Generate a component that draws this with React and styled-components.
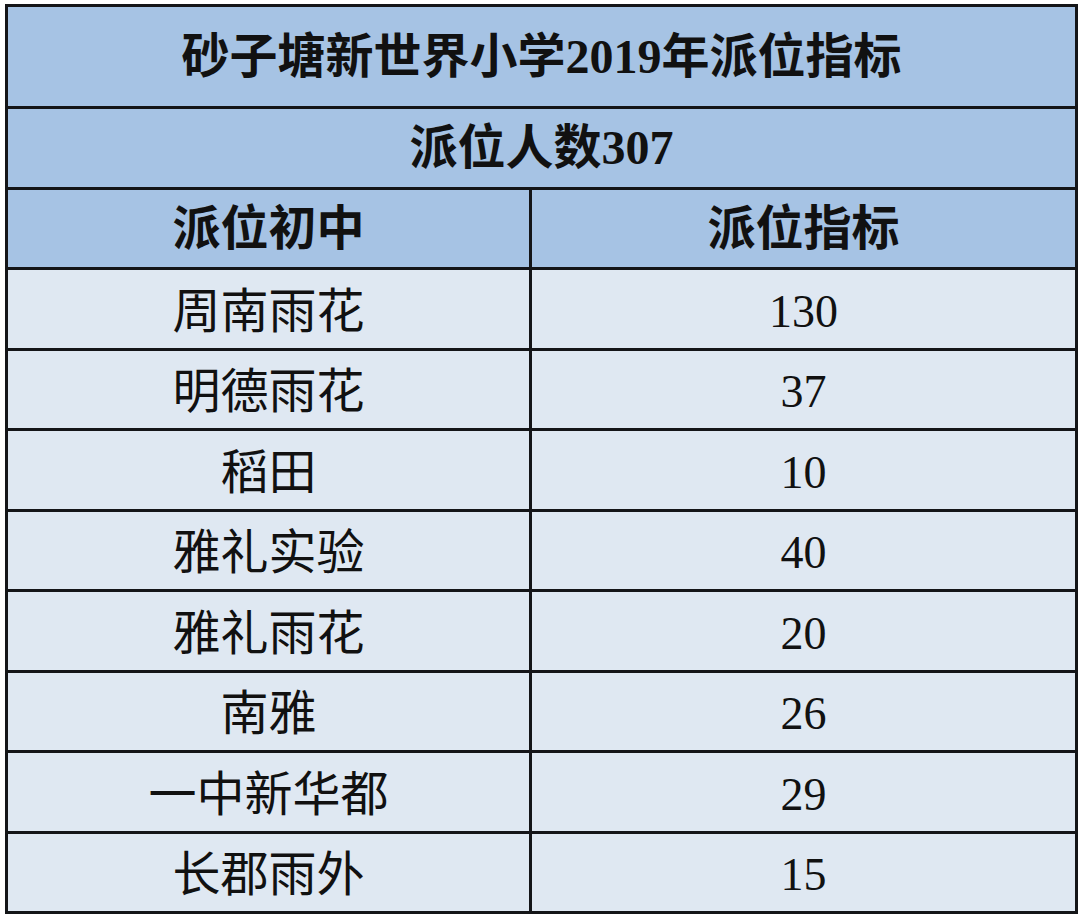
import React from 'react';
import styled, { createGlobalStyle } from 'styled-components';

const GlobalStyle = createGlobalStyle`
  html, body {
    margin: 0;
    padding: 0;
    background: #ffffff;
  }
`;

const Page = styled.div`
  padding: 4px 5px 0 5px;
  width: 1070px;
`;

const Table = styled.table`
  width: 1070px;
  border-collapse: collapse;
  table-layout: fixed;
  font-family: "Liberation Serif", "Noto Sans CJK SC", serif;
  color: #111;
`;

const Cell = styled.td`
  border: 3px solid #141518;
  background: ${p => (p.$head ? '#a6c3e4' : '#dfe8f2')};
  height: ${p => p.$h}px;
  padding: ${p => (p.$head ? '0' : '6px 0 0 0')};
  box-sizing: border-box;
  text-align: center;
  vertical-align: middle;
  font-size: ${p => (p.$num ? 46 : 48)}px;
  font-weight: ${p => (p.$head ? 700 : 400)};
  line-height: 1;
  white-space: nowrap;
`;

const rows = [
  ['周南雨花', '130'],
  ['明德雨花', '37'],
  ['稻田', '10'],
  ['雅礼实验', '40'],
  ['雅礼雨花', '20'],
  ['南雅', '26'],
  ['一中新华都', '29'],
  ['长郡雨外', '15'],
];

export default function App() {
  return (
    <Page>
      <GlobalStyle />
      <Table>
        <colgroup>
          <col style={{ width: '524px' }} />
          <col style={{ width: '546px' }} />
        </colgroup>
        <tbody>
          <tr>
            <Cell colSpan={2} $head $h={102}>砂子塘新世界小学2019年派位指标</Cell>
          </tr>
          <tr>
            <Cell colSpan={2} $head $h={81}>派位人数307</Cell>
          </tr>
          <tr>
            <Cell $head $h={80}>派位初中</Cell>
            <Cell $head $h={80}>派位指标</Cell>
          </tr>
          {rows.map(([school, count]) => (
            <tr key={school}>
              <Cell $h={80.5}>{school}</Cell>
              <Cell $h={80.5} $num>{count}</Cell>
            </tr>
          ))}
        </tbody>
      </Table>
    </Page>
  );
}
